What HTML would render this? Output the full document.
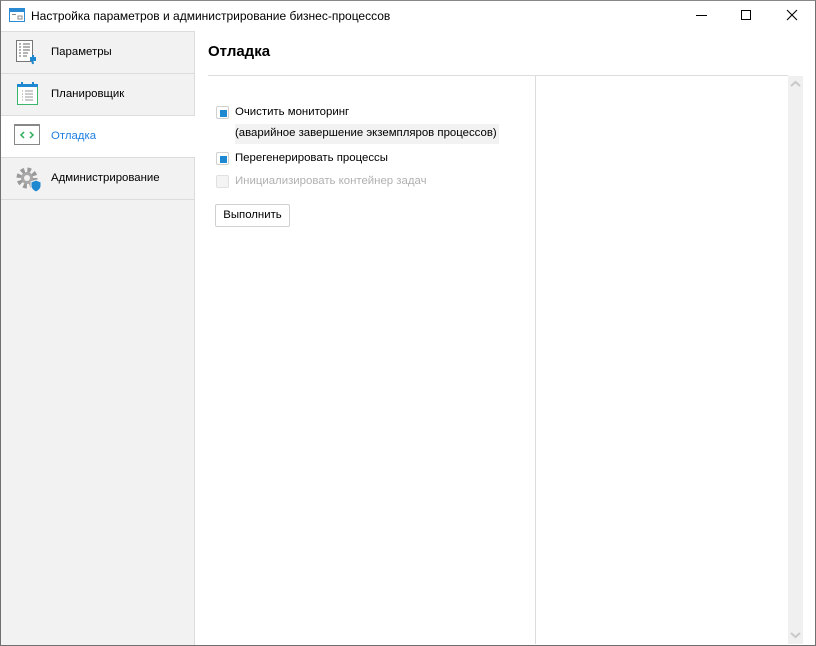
<!DOCTYPE html><html><head><meta charset="utf-8"><style>
*{margin:0;padding:0;box-sizing:border-box}
body{width:816px;height:646px;overflow:hidden;font-family:"Liberation Sans",sans-serif;font-size:11.4px;color:#000;background:#fff;position:relative}
.win{position:absolute;left:0;top:0;width:816px;height:646px;border:1px solid #707070;border-top-color:#888}
.abs{position:absolute}
.side{left:1px;top:31px;width:194px;height:614px;background:#f2f2f2;border-right:1px solid #dcdcdc;border-top:1px solid #dcdcdc}
.item{position:absolute;left:0;width:194px;height:42px;border-bottom:1px solid #dcdcdc}
.item span{position:absolute;left:50px;top:14px}
.cb{position:absolute;width:13px;height:13px;border:1px solid #d0d0d0;border-radius:2px;background:#fff}
.cb i{position:absolute;left:3px;top:3px;width:7px;height:7px;background:#1e88d0}
</style></head><body>
<div class="win"></div>
<svg class="abs" style="left:9px;top:8px" width="16" height="14"><rect x=".5" y=".5" width="15" height="13" fill="#fff" stroke="#2a8ad4"/><rect x="1" y="1" width="14" height="3" fill="#2a8ad4"/><rect x="3" y="6" width="4" height="1" fill="#888"/><rect x="9" y="8" width="4" height="3" fill="none" stroke="#888"/></svg>
<div class="abs" style="left:31px;top:9px;font-size:12px">Настройка параметров и администрирование бизнес-процессов</div>
<div class="abs" style="left:696px;top:15px;width:11px;height:1px;background:#000"></div>
<div class="abs" style="left:741px;top:10px;width:10px;height:10px;border:1px solid #000"></div>
<svg class="abs" style="left:786px;top:9px" width="12" height="12"><path d="M1 1L11 11M11 1L1 11" stroke="#000" stroke-width="1.1"/></svg>
<div class="abs side">
<div class="item" style="top:0"><svg class="abs" style="left:15px;top:8px" width="24" height="26"><rect x=".5" y=".5" width="16" height="21" fill="#fff" stroke="#777"/><path d="M3 4h2M7 4h7M3 7h2M7 7h7M3 10h2M7 10h7M3 13h2M7 13h5M3 16h2M7 16h4" stroke="#666"/><path d="M17 15v5h-2v-3M17 20h2v-3M16 19l1 5" stroke="#1e88d0" stroke-width="2" fill="none"/></svg><span>Параметры</span></div>
<div class="item" style="top:42px"><svg class="abs" style="left:16px;top:8px" width="22" height="24"><rect x=".5" y="2.5" width="20" height="20" fill="#fff" stroke="#3bb56b"/><rect x="0" y="2" width="21" height="3" fill="#1e88d0"/><rect x="4" y="0" width="2" height="4" fill="#1e88d0"/><rect x="15" y="0" width="2" height="4" fill="#1e88d0"/><path d="M5 9h1M8 9h8M5 12h1M8 12h8M5 15h1M8 15h8M5 18h1M8 18h8" stroke="#999"/></svg><span>Планировщик</span></div>
<div class="item" style="top:84px;background:#fff"><svg class="abs" style="left:13px;top:8px" width="26" height="22"><rect x=".5" y=".5" width="25" height="20" fill="#fff" stroke="#888"/><rect x="0" y="0" width="26" height="2" fill="#888"/><path d="M10 8l-3 3 3 3M16 8l3 3-3 3" stroke="#2bb05a" stroke-width="1.5" fill="none"/></svg><span style="color:#1e7fe0">Отладка</span></div>
<div class="item" style="top:126px"><svg class="abs" style="left:14px;top:8px" width="28" height="26"><circle cx="12" cy="12" r="8" fill="none" stroke="#9a9a9a" stroke-width="5" stroke-dasharray="3.5 2.8"/><circle cx="12" cy="12" r="6" fill="#a8a8a8"/><circle cx="12" cy="12" r="3" fill="#f2f2f2"/><path d="M16 16l5-2 5 2v4c0 3-3 5-5 6-2-1-5-3-5-6z" fill="#1e88d0" stroke="#f2f2f2"/></svg><span>Администрирование</span></div>
</div>
<div class="abs" style="left:208px;top:43px;font-size:15px;font-weight:bold">Отладка</div>
<div class="abs" style="left:208px;top:75px;width:580px;height:1px;background:#dcdcdc"></div>
<div class="abs" style="left:535px;top:76px;width:1px;height:568px;background:#dcdcdc"></div>
<div class="abs" style="left:788px;top:76px;width:15px;height:568px;background:#f0f0f0"></div>
<svg class="abs" style="left:790px;top:80px" width="11" height="8"><path d="M1 6l4.5-4 4.5 4" stroke="#c8c8c8" stroke-width="2" fill="none"/></svg>
<svg class="abs" style="left:790px;top:631px" width="11" height="8"><path d="M1 2l4.5 4 4.5-4" stroke="#c8c8c8" stroke-width="2" fill="none"/></svg>
<div class="cb" style="left:216px;top:106px"><i></i></div>
<div class="abs" style="left:235px;top:106px">Очистить мониторинг</div>
<div class="abs" style="left:235px;top:124px;height:20px;padding:3px 2px 0 0;background:#f2f2f2">(аварийное завершение экземпляров процессов)</div>
<div class="cb" style="left:216px;top:152px"><i></i></div>
<div class="abs" style="left:235px;top:152px">Перегенерировать процессы</div>
<div class="cb" style="left:216px;top:175px;background:#f4f4f4;border-color:#e0e0e0"></div>
<div class="abs" style="left:235px;top:175px;color:#b0b0b0">Инициализировать контейнер задач</div>
<div class="abs" style="left:215px;top:204px;width:75px;height:23px;border:1px solid #d0d0d0;border-radius:2px;background:#fff;text-align:center;line-height:21px">Выполнить</div>
</body></html>
